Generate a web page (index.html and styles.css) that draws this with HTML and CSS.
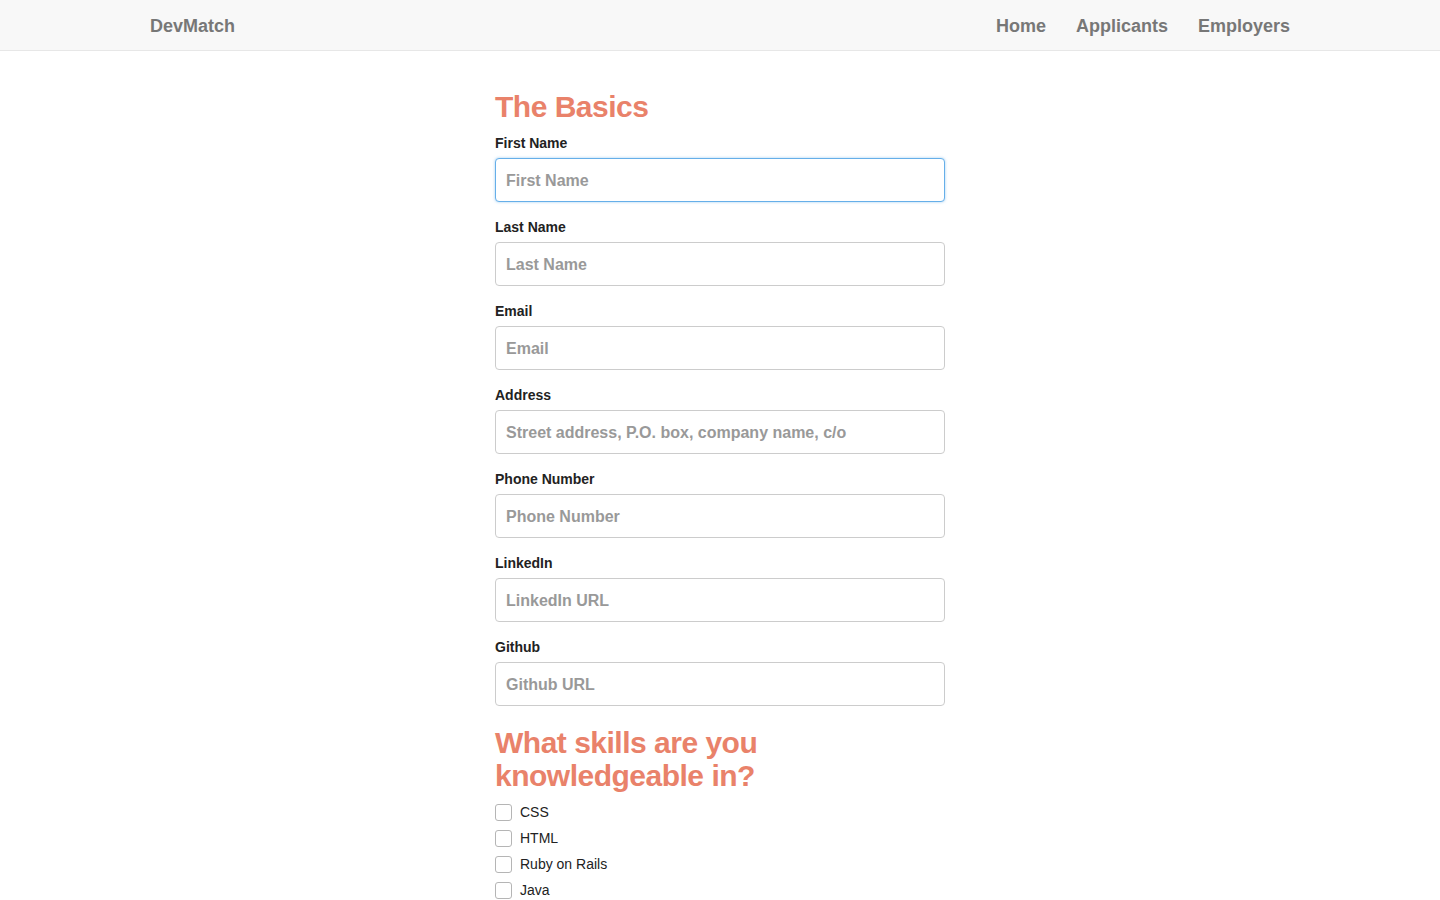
FILE: index.html
```html
<!DOCTYPE html>
<html lang="en">
<head>
<meta charset="utf-8">
<title>DevMatch</title>
<link rel="stylesheet" href="styles.css">
</head>
<body>
<nav class="navbar">
  <div class="nav-inner">
    <a class="brand" href="#">DevMatch</a>
    <ul class="nav-links">
      <li><a href="#">Home</a></li>
      <li><a href="#">Applicants</a></li>
      <li><a href="#">Employers</a></li>
    </ul>
  </div>
</nav>
<main class="content">
  <form class="form-col">
    <h2 class="section-title">The Basics</h2>
    <div class="form-group">
      <label for="fn">First Name</label>
      <input id="fn" class="form-control is-focused" type="text" placeholder="First Name">
    </div>
    <div class="form-group">
      <label for="ln">Last Name</label>
      <input id="ln" class="form-control" type="text" placeholder="Last Name">
    </div>
    <div class="form-group">
      <label for="em">Email</label>
      <input id="em" class="form-control" type="text" placeholder="Email">
    </div>
    <div class="form-group">
      <label for="ad">Address</label>
      <input id="ad" class="form-control" type="text" placeholder="Street address, P.O. box, company name, c/o">
    </div>
    <div class="form-group">
      <label for="ph">Phone Number</label>
      <input id="ph" class="form-control" type="text" placeholder="Phone Number">
    </div>
    <div class="form-group">
      <label for="li">LinkedIn</label>
      <input id="li" class="form-control" type="text" placeholder="LinkedIn URL">
    </div>
    <div class="form-group">
      <label for="gh">Github</label>
      <input id="gh" class="form-control" type="text" placeholder="Github URL">
    </div>
    <h2 class="section-title">What skills are you knowledgeable in?</h2>
    <div class="checks">
      <label class="check"><span class="box"></span>CSS</label>
      <label class="check"><span class="box"></span>HTML</label>
      <label class="check"><span class="box"></span>Ruby on Rails</label>
      <label class="check"><span class="box"></span>Java</label>
    </div>
  </form>
</main>
</body>
</html>
```
FILE: styles.css
```css
* { box-sizing: border-box; }
html, body { margin: 0; padding: 0; }
body {
  font-family: "Liberation Sans", Arial, Helvetica, sans-serif;
  font-size: 14px;
  line-height: 20px;
  color: #222;
  background: #fff;
}
.navbar {
  height: 51px;
  background: #f8f8f8;
  border-bottom: 1px solid #e7e7e7;
}
.nav-inner {
  width: 1140px;
  margin: 0 auto;
  height: 50px;
  padding-top: 2px;
  display: flex;
  align-items: center;
  justify-content: space-between;
}
.brand {
  font-size: 18px;
  font-weight: bold;
  color: #777;
  text-decoration: none;
}
.nav-links {
  list-style: none;
  margin: 0;
  padding: 0;
  display: flex;
  gap: 30px;
}
.nav-links a {
  font-size: 18px;
  font-weight: bold;
  color: #777;
  text-decoration: none;
}
.content {
  padding-top: 19px;
}
.form-col {
  width: 450px;
  margin: 0 auto;
}
.section-title {
  color: #e9826a;
  font-size: 30px;
  line-height: 33px;
  font-weight: bold;
  margin: 20px 0 10px;
  letter-spacing: -0.5px;
}
.form-group {
  margin-bottom: 15px;
}
.form-group label {
  display: block;
  font-weight: bold;
  font-size: 14px;
  line-height: 20px;
  margin-bottom: 5px;
  color: #222;
}
.form-control {
  display: block;
  width: 100%;
  height: 44px;
  padding: 2px 10px 0;
  font-family: inherit;
  font-size: 16px;
  font-weight: bold;
  color: #555;
  border: 1px solid #ccc;
  border-radius: 4px;
  background: #fff;
  outline: none;
}
.form-control::placeholder {
  color: #999;
  font-weight: bold;
}
.form-control.is-focused {
  border-color: #66afe9;
  box-shadow: 0 0 3px rgba(102, 175, 233, 0.6);
}
.checks {
  display: flex;
  flex-direction: column;
  gap: 6px;
}
.check {
  display: flex;
  align-items: center;
  gap: 8px;
  font-size: 14px;
  line-height: 20px;
  color: #222;
}
.box {
  width: 17px;
  height: 17px;
  border: 1px solid #b5b5b5;
  border-radius: 3px;
  background: #fff;
  flex: none;
}
```
